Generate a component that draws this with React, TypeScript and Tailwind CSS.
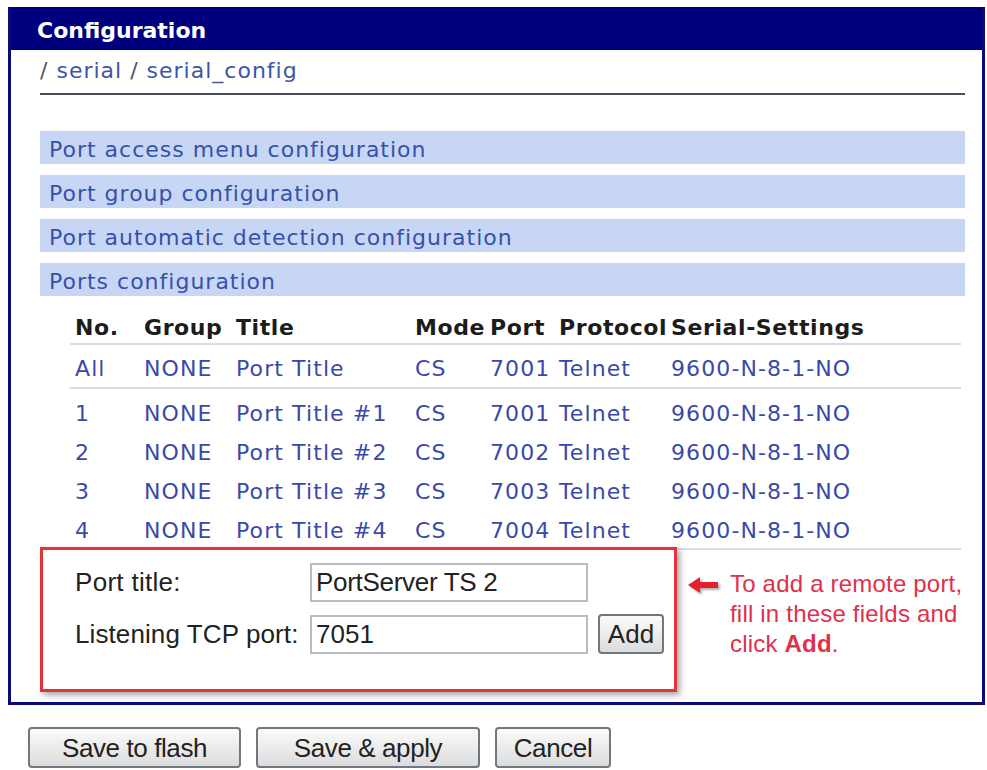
import React from 'react'

type PortRow = {
    no: string;
    group: string;
    title: string;
    mode: string;
    port: string;
    protocol: string;
    settings: string;
}

const rows: PortRow[] = [
    { no: "1", group: "NONE", title: "Port Title #1", mode: "CS", port: "7001", protocol: "Telnet", settings: "9600-N-8-1-NO" },
    { no: "2", group: "NONE", title: "Port Title #2", mode: "CS", port: "7002", protocol: "Telnet", settings: "9600-N-8-1-NO" },
    { no: "3", group: "NONE", title: "Port Title #3", mode: "CS", port: "7003", protocol: "Telnet", settings: "9600-N-8-1-NO" },
    { no: "4", group: "NONE", title: "Port Title #4", mode: "CS", port: "7004", protocol: "Telnet", settings: "9600-N-8-1-NO" },
]

const sections = [
    "Port access menu configuration",
    "Port group configuration",
    "Port automatic detection configuration",
    "Ports configuration",
]

const verdana = "font-['DejaVu_Sans',Verdana,sans-serif]"
const arial = "font-['Liberation_Sans',Arial,sans-serif]"

const Row = ({ row, className }: { row: PortRow; className?: string }) => (
    <div className={`flex items-center pt-[4px] text-[#3a49a8] tracking-[1.1px] ${className ?? ""}`}>
        <div className="w-[74px] pl-[5px]">{row.no}</div>
        <div className="w-[92px]">{row.group}</div>
        <div className="w-[179px]">{row.title}</div>
        <div className="w-[75px]">{row.mode}</div>
        <div className="w-[69px]">{row.port}</div>
        <div className="w-[112px]">{row.protocol}</div>
        <div className="flex-1">{row.settings}</div>
    </div>
)

const Button = ({ label, width }: { label: string; width: string }) => (
    <button
        type="button"
        className={`${width} h-[41px] rounded-[4px] border-2 border-[#6f7780] bg-gradient-to-b from-[#fbfbfb] to-[#dcdcdc] text-[26px] leading-none text-[#222] tracking-[-0.4px] ${arial}`}
    >
        {label}
    </button>
)

const App = () => {
    return (
        <div className={`w-[987px] h-[770px] bg-white overflow-hidden ${verdana}`}>
            <div className="ml-[8px] mt-[7px] w-[977px] border-[3px] border-t-0 border-[#0b0b78]">
                <div className="h-[43px] bg-[#00007e] flex items-center pt-[3px] pl-[26px] text-white font-bold text-[22px]">
                    Configuration
                </div>
                <div className="pl-[29px] pr-[17px] pb-[10px]">
                    <div className="h-[45px] flex items-center pb-[2px] text-[22px] tracking-[1px] text-[#3d56a6] border-b-2 border-[#4a4d5a]">
                        <span className="text-[#555]">/</span>&nbsp;serial&nbsp;<span className="text-[#555]">/</span>&nbsp;serial_config
                    </div>
                    <div className="mt-[36px] flex flex-col gap-[11px]">
                        {sections.map((s) => (
                            <div key={s} className="h-[33px] bg-[#c8d6f6] flex items-center pt-[3px] pl-[9px] text-[22px] tracking-[1px] text-[#3552a8]">
                                {s}
                            </div>
                        ))}
                    </div>
                    <div className="ml-[30px] mr-[4px] mt-[12px] text-[22px]">
                        <div className="flex items-center pt-[4px] h-[37px] font-bold text-[#1c1c1c] border-b-2 border-[#d6dde8] tracking-[0.6px]">
                            <div className="w-[74px] pl-[5px]">No.</div>
                            <div className="w-[92px]">Group</div>
                            <div className="w-[179px]">Title</div>
                            <div className="w-[75px]">Mode</div>
                            <div className="w-[69px]">Port</div>
                            <div className="w-[112px]">Protocol</div>
                            <div className="flex-1">Serial-Settings</div>
                        </div>
                        <Row
                            row={{ no: "All", group: "NONE", title: "Port Title", mode: "CS", port: "7001", protocol: "Telnet", settings: "9600-N-8-1-NO" }}
                            className="h-[44px] border-b-2 border-[#d6dde8]"
                        />
                        <div className="pt-[3px] border-b-2 border-[#d6dde8]">
                            {rows.map((r) => (
                                <Row key={r.no} row={r} className="h-[39px]" />
                            ))}
                        </div>
                    </div>
                    <div className="flex items-start -mt-[3px]">
                        <div className={`relative z-10 w-[637px] h-[145px] bg-white border-[3px] border-[#e2343a] shadow-[3px_3px_6px_rgba(0,0,0,0.35)] pl-[32px] pt-[12px] text-[26px] text-[#222] ${arial}`}>
                            <div className="flex items-center h-[40px]">
                                <div className="w-[235px] tracking-[0.3px]">Port title:</div>
                                <div className="w-[278px] h-[39px] border-2 border-[#b8bcc2] flex items-center pl-[4px] tracking-[-0.3px]">PortServer TS 2</div>
                            </div>
                            <div className="flex items-center h-[40px] mt-[12px]">
                                <div className="w-[235px] tracking-[0.1px]">Listening TCP port:</div>
                                <div className="w-[278px] h-[39px] border-2 border-[#b8bcc2] flex items-center pl-[4px]">7051</div>
                                <button type="button" className="ml-[10px] w-[66px] h-[40px] rounded-[4px] border-2 border-[#6f7780] bg-gradient-to-b from-[#fbfbfb] to-[#dcdcdc] text-[26px] leading-none text-[#222]">
                                    Add
                                </button>
                            </div>
                        </div>
                        <div className={`ml-[11px] mt-[22px] flex items-start gap-[10px] text-[24px] leading-[30px] tracking-[0.2px] text-[#e0304a] ${arial}`}>
                            <svg width="32" height="20" viewBox="0 0 32 20" className="mt-[6px] drop-shadow-[2px_2px_1px_rgba(0,0,0,0.3)]">
                                <path d="M0 10 L12 2 L12 7 L30 7 L30 13 L12 13 L12 18 Z" fill="#e51f2b" />
                            </svg>
                            <div>
                                To add a remote port,<br />
                                fill in these fields and<br />
                                click <b>Add</b>.
                            </div>
                        </div>
                    </div>
                </div>
            </div>
            <div className="flex gap-[15px] ml-[28px] mt-[22px]">
                <Button label="Save to flash" width="w-[213px]" />
                <Button label="Save & apply" width="w-[224px]" />
                <Button label="Cancel" width="w-[116px]" />
            </div>
        </div>
    )
}

export default App
